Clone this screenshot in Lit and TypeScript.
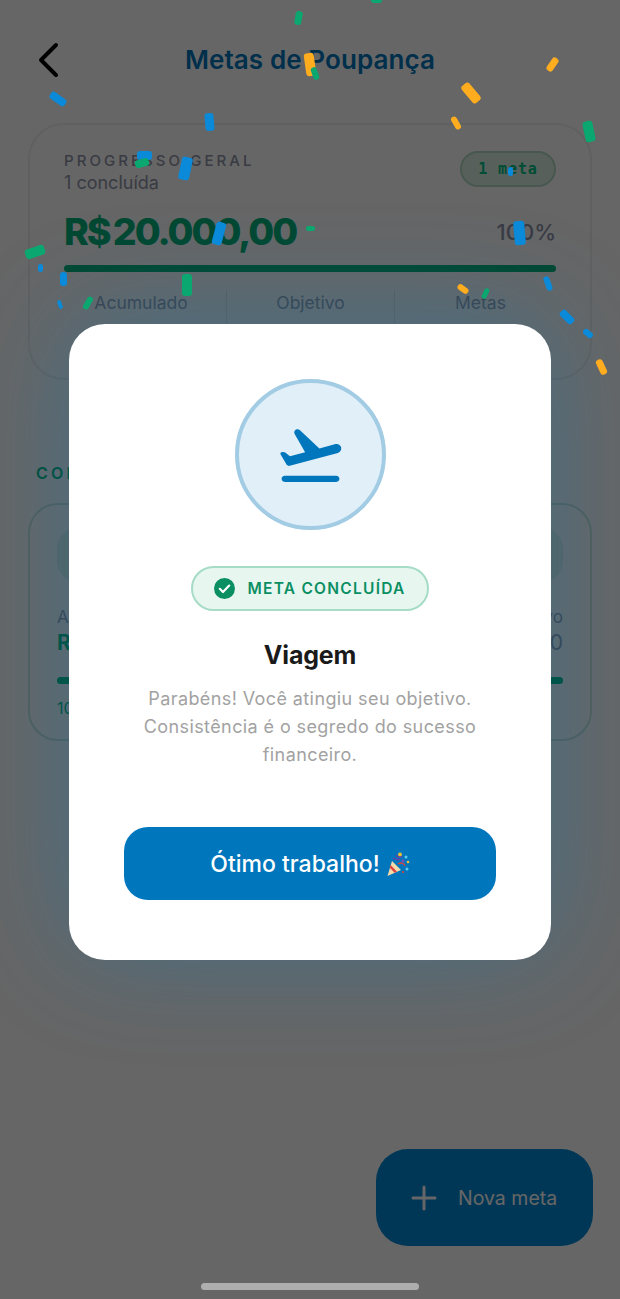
import { LitElement, html, css } from "lit";
import { customElement } from "lit/decorators.js";

// x, y = centre of the piece, w, h, rotation, colour
const BLUE = "#0a8ad8";
const GREEN = "#0aa870";
const ORANGE = "#ffad1f";
const CONFETTI: [number, number, number, number, number, string][] = [
  [376, 0, 11, 6, 0, GREEN],
  [298, 18, 7, 14, 10, GREEN],
  [310, 64, 10, 23, -8, ORANGE],
  [315, 73, 6, 13, -20, GREEN],
  [552, 64, 7, 15, 35, ORANGE],
  [58, 99, 8, 18, -55, BLUE],
  [471, 93, 10, 22, -40, ORANGE],
  [209, 122, 9, 18, -5, BLUE],
  [456, 123, 6, 14, -30, ORANGE],
  [589, 131, 10, 21, -12, GREEN],
  [144, 155, 15, 9, 0, BLUE],
  [142, 163, 14, 8, -15, GREEN],
  [185, 168, 11, 23, 12, BLUE],
  [510, 171, 5, 9, 0, BLUE],
  [219, 233, 10, 23, 15, BLUE],
  [310, 228, 9, 5, 0, GREEN],
  [519, 233, 11, 24, -5, BLUE],
  [35, 252, 20, 10, -18, GREEN],
  [40, 268, 5, 8, 0, BLUE],
  [63, 279, 7, 14, 0, BLUE],
  [187, 285, 10, 22, 0, GREEN],
  [463, 289, 12, 6, 35, ORANGE],
  [485, 293, 5, 11, 25, GREEN],
  [548, 283, 6, 15, -20, BLUE],
  [88, 303, 6, 14, 30, GREEN],
  [60, 304, 4, 9, -20, BLUE],
  [567, 317, 8, 16, -45, BLUE],
  [588, 333, 6, 11, -50, BLUE],
  [601, 367, 7, 16, -25, ORANGE],
];

@customElement("app-root")
export class AppRoot extends LitElement {
  static styles = css`
    :host {
      display: block;
      font-family: Inter, "Noto Sans", sans-serif;
    }
    .screen {
      position: relative;
      width: 620px;
      height: 1299px;
      overflow: hidden;
      background: #fff;
      box-sizing: border-box;
      padding: 0 28px;
    }
    .header {
      height: 123px;
      display: flex;
      align-items: center;
      justify-content: center;
      padding-bottom: 4px;
      box-sizing: border-box;
      position: relative;
    }
    .back {
      position: absolute;
      left: 8px;
      top: 41px;
    }
    .title {
      font-size: 26px;
      font-weight: 600;
      color: #0077bd;
      letter-spacing: 0.1px;
    }
    .card {
      border: 2px solid #f0f0f0;
      border-radius: 36px;
      height: 257px;
      box-sizing: border-box;
      padding: 26px 34px;
    }
    .top {
      display: flex;
      justify-content: space-between;
      align-items: flex-start;
    }
    .eyebrow {
      font-size: 15px;
      font-weight: 500;
      letter-spacing: 3.05px;
      color: #8f93a8;
      line-height: 20px;
    }
    .done {
      font-size: 18px;
      color: #8f93a8;
      line-height: 24px;
    }
    .badge {
      width: 96px;
      height: 36px;
      box-sizing: border-box;
      border: 2px solid #b4dac8;
      border-radius: 18px;
      background: #dcefe6;
      color: #00c084;
      font-family: "DejaVu Sans Mono", monospace;
      font-size: 15px;
      font-weight: 600;
      letter-spacing: 0.9px;
      display: flex;
      align-items: center;
      justify-content: center;
    }
    .amount-row {
      display: flex;
      justify-content: space-between;
      align-items: center;
      margin-top: 10px;
      height: 53px;
    }
    .amount {
      font-size: 37.5px;
      font-weight: 800;
      color: #00b47c;
      letter-spacing: -2px;
      word-spacing: -3px;
    }
    .pct {
      font-size: 22px;
      font-weight: 500;
      color: #8f93a8;
    }
    .bar {
      height: 7px;
      border-radius: 4px;
      background: #00b47c;
      margin-top: 7px;
    }
    .stats {
      display: grid;
      grid-template-columns: 162px 168px 162px;
      margin-top: 18px;
    }
    .stat {
      text-align: center;
      font-size: 17.5px;
      line-height: 26px;
      color: #9aa6bc;
      border-left: 1px solid #e6e9ee;
      height: 60px;
    }
    .stat:first-child {
      border-left: none;
      padding-right: 8px;
    }
    .stat:last-child {
      padding-left: 10px;
    }
    .section {
      margin: 83px 0 0 8px;
      height: 40px;
      line-height: 20px;
      font-size: 16px;
      font-weight: 600;
      letter-spacing: 3.2px;
      color: #00c084;
    }
    .goal {
      border: 2px solid #cfe8de;
      border-radius: 30px;
      height: 238px;
      box-sizing: border-box;
      padding: 22px 27px;
    }
    .band {
      height: 56px;
      border-radius: 22px;
      background: #e3f4ee;
    }
    .goal-row {
      display: flex;
      justify-content: space-between;
      margin-top: 22px;
      font-size: 17px;
      line-height: 24px;
      color: #9aa6bc;
    }
    .goal-values {
      display: flex;
      justify-content: space-between;
      font-size: 21px;
      line-height: 28px;
      color: #9aa6bc;
    }
    .goal-values b {
      color: #00c084;
      font-weight: 700;
    }
    .goal .bar {
      margin-top: 20px;
      background: #00c084;
    }
    .goal-pct {
      margin-top: 13px;
      font-size: 16px;
      line-height: 22px;
      color: #00c084;
    }
    .fab {
      position: absolute;
      left: 376px;
      top: 1149px;
      width: 217px;
      height: 97px;
      border-radius: 32px;
      background: #0089d6;
      color: #fff;
      display: flex;
      align-items: center;
      gap: 21px;
      padding-left: 35px;
      box-sizing: border-box;
      font-size: 19.5px;
      font-weight: 400;
    }
    .overlay {
      position: absolute;
      inset: 0;
      background: rgba(0, 0, 0, 0.6);
      display: flex;
      align-items: center;
      justify-content: center;
      padding-bottom: 16px;
      box-sizing: border-box;
    }
    .modal {
      width: 482px;
      height: 636px;
      box-sizing: border-box;
      background: #fff;
      border-radius: 36px;
      box-shadow: 0 -8px 110px rgba(0, 130, 200, 0.32);
      padding-top: 55px;
      display: flex;
      flex-direction: column;
      align-items: center;
    }
    .circle {
      width: 151px;
      height: 151px;
      box-sizing: border-box;
      border-radius: 50%;
      border: 4px solid #a2cbe4;
      background: #e0eff8;
      display: flex;
      align-items: center;
      justify-content: center;
    }
    .pill {
      margin-top: 36px;
      width: 238px;
      height: 45px;
      box-sizing: border-box;
      border: 2px solid #a6dcc6;
      border-radius: 23px;
      background: #e8f6f0;
      display: flex;
      align-items: center;
      justify-content: center;
      gap: 12px;
      color: #0a8f63;
      font-size: 15.5px;
      font-weight: 600;
      letter-spacing: 1.25px;
    }
    .name {
      margin-top: 25px;
      font-size: 25px;
      line-height: 38px;
      font-weight: 700;
      color: #1a1a1a;
      letter-spacing: -0.2px;
    }
    .msg {
      margin-top: 11px;
      width: 372px;
      text-align: center;
      font-size: 18px;
      line-height: 28px;
      letter-spacing: 0.4px;
      color: #a2a2a2;
    }
    .ok {
      margin-top: 58px;
      width: 372px;
      height: 73px;
      box-sizing: border-box;
      padding-top: 2px;
      border-radius: 24px;
      background: #0077bd;
      color: #fff;
      display: flex;
      align-items: center;
      justify-content: center;
      gap: 6px;
      font-size: 23px;
      font-weight: 500;
    }
    .piece {
      position: absolute;
      border-radius: 3px;
    }
    .home {
      position: absolute;
      left: 201px;
      top: 1283px;
      width: 218px;
      height: 7px;
      border-radius: 4px;
      background: #aeaeae;
    }
  `;

  render() {
    return html`
      <div class="screen">
        <div class="header">
          <svg class="back" width="28" height="38" viewBox="0 0 28 38" fill="none">
            <path d="M20 4 L5 19 L20 34" stroke="#000" stroke-width="3.9" stroke-linecap="round" stroke-linejoin="round" />
          </svg>
          <div class="title">Metas de Poupança</div>
        </div>

        <div class="card">
          <div class="top">
            <div>
              <div class="eyebrow">PROGRESSO GERAL</div>
              <div class="done">1 concluída</div>
            </div>
            <div class="badge">1 meta</div>
          </div>
          <div class="amount-row">
            <div class="amount">R$ 20.000,00</div>
            <div class="pct">100%</div>
          </div>
          <div class="bar"></div>
          <div class="stats">
            <div class="stat">Acumulado</div>
            <div class="stat">Objetivo</div>
            <div class="stat">Metas</div>
          </div>
        </div>

        <div class="section">CONCLUÍDAS</div>

        <div class="goal">
          <div class="band"></div>
          <div class="goal-row"><span>Acumulado</span><span>Objetivo</span></div>
          <div class="goal-values"><b>R$ 20.000,00</b><span>R$ 20.000,00</span></div>
          <div class="bar"></div>
          <div class="goal-pct">100%</div>
        </div>

        <div class="fab">
          <svg width="26" height="26" viewBox="0 0 26 26">
            <path d="M13 2V24M2 13H24" stroke="#fff" stroke-width="3" stroke-linecap="round" />
          </svg>
          <span>Nova meta</span>
        </div>

        <div class="overlay">
          <div class="modal">
            <div class="circle">
              <svg width="73" height="73" viewBox="0 0 24 24" fill="#0077bd">
                <path d="M3.5 19h17c.55 0 1 .45 1 1s-.45 1-1 1h-17c-.55 0-1-.45-1-1s.45-1 1-1zm18.57-9.36c-.22-.8-1.04-1.27-1.84-1.06L14.92 10 8.46 3.98c-.27-.26-.66-.35-1.02-.25-.68.18-1 .96-.65 1.57l3.44 5.96-4.97 1.33-1.57-1.24c-.25-.19-.57-.26-.88-.18l-.33.09c-.32.08-.47.45-.3.73l1.88 3.25c.23.39.69.58 1.12.47L21 11.49c.8-.22 1.28-1.04 1.07-1.85z" />
              </svg>
            </div>
            <div class="pill">
              <svg width="21" height="21" viewBox="0 0 21 21">
                <circle cx="10.5" cy="10.5" r="10.5" fill="#0a8f63" />
                <path d="M5.8 10.8 L9 14 L15.2 7.6" fill="none" stroke="#fff" stroke-width="2.2" stroke-linecap="round" stroke-linejoin="round" />
              </svg>
              <span>META CONCLUÍDA</span>
            </div>
            <div class="name">Viagem</div>
            <div class="msg">Parabéns! Você atingiu seu objetivo. Consistência é o segredo do sucesso financeiro.</div>
            <div class="ok">
              <span>Ótimo trabalho!</span>
              <svg width="24" height="25" viewBox="0 0 24 25">
                <path d="M6 9 L15 18 L1.5 24 Z" fill="#f6d9a8" />
                <path d="M4.6 13 L11 19.8 L8.6 20.8 L3.6 15.6 Z" fill="#d8433f" />
                <path d="M7 6 C10 8 12 9 14 7 M10 3 C12 6 15 6 16 4" fill="none" stroke="#6a3fa8" stroke-width="1.4" />
                <path d="M12 12 C15 10 18 11 19 14" fill="none" stroke="#d8433f" stroke-width="1.4" />
                <circle cx="14" cy="2.4" r="1.9" fill="#f4c430" />
                <circle cx="20" cy="5" r="1.5" fill="#5ec8f0" />
                <circle cx="17" cy="9" r="1.4" fill="#7a4fc0" />
                <circle cx="22" cy="10" r="1.3" fill="#f4c430" />
                <circle cx="21" cy="17" r="1.5" fill="#5ec8f0" />
                <circle cx="17" cy="20" r="1.1" fill="#d8433f" />
              </svg>
            </div>
          </div>
        </div>

        ${CONFETTI.map(
          ([x, y, w, h, r, c]) => html`<div
            class="piece"
            style="left:${x - w / 2}px;top:${y - h / 2}px;width:${w}px;height:${h}px;transform:rotate(${r}deg);background:${c}"
          ></div>`
        )}

        <div class="home"></div>
      </div>
    `;
  }
}
